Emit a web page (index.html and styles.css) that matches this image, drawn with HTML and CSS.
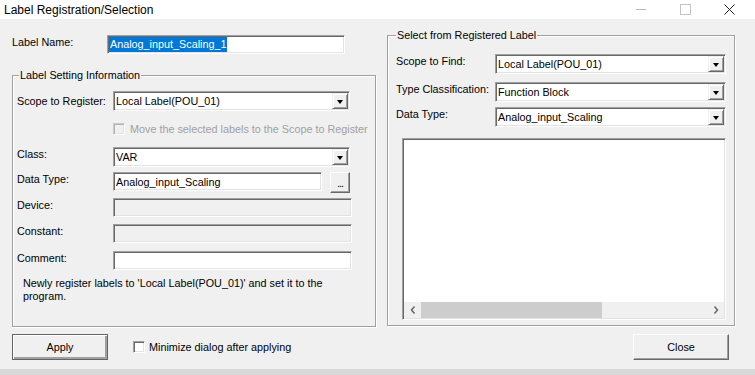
FILE: index.html
```html
<!DOCTYPE html>
<html lang="en">
<head>
    <meta charset="UTF-8">
    <title>Label Registration/Selection</title>
    <link rel="stylesheet" href="styles.css">
</head>
<body>
    <div class="window">
        <div class="titlebar">
            <span class="title">Label Registration/Selection</span>
            <div class="caption-buttons">
                <span class="cap cap-min"></span>
                <span class="cap cap-max"></span>
                <span class="cap cap-close">
                    <svg width="11" height="11" viewBox="0 0 11 11"><path d="M0.5 0.5 L10.5 10.5 M10.5 0.5 L0.5 10.5" stroke="#222" stroke-width="1" fill="none"/></svg>
                </span>
            </div>
        </div>

        <div class="dialog">
            <div class="left-col">
                <div class="name-row">
                    <span class="name-label">Label Name:</span>
                    <div class="edit name-edit"><span class="selected">Analog_input_Scaling_1</span></div>
                </div>

                <fieldset class="group group-left">
                    <legend>Label Setting Information</legend>
                    <div class="row row-scope">
                        <span class="lbl">Scope to Register:</span>
                        <div class="combo combo-left"><span class="combo-text">Local Label(POU_01)</span><span class="drop"></span></div>
                    </div>
                    <div class="check-row">
                        <span class="check check-disabled"></span>
                        <span class="check-text disabled-text">Move the selected labels to the Scope to Register</span>
                    </div>
                    <div class="row">
                        <span class="lbl">Class:</span>
                        <div class="combo combo-left"><span class="combo-text">VAR</span><span class="drop"></span></div>
                    </div>
                    <div class="row row-type">
                        <span class="lbl">Data Type:</span>
                        <div class="edit type-edit"><span class="edit-text">Analog_input_Scaling</span></div>
                        <span class="browse">...</span>
                    </div>
                    <div class="row row-device">
                        <span class="lbl">Device:</span>
                        <div class="edit wide-edit disabled"></div>
                    </div>
                    <div class="row row-constant">
                        <span class="lbl">Constant:</span>
                        <div class="edit wide-edit disabled"></div>
                    </div>
                    <div class="row row-comment">
                        <span class="lbl">Comment:</span>
                        <div class="edit wide-edit"></div>
                    </div>
                    <p class="note">Newly register labels to 'Local Label(POU_01)' and set it to the program.</p>
                </fieldset>
            </div>

            <fieldset class="group group-right">
                <legend>Select from Registered Label</legend>
                <div class="row">
                    <span class="lbl lbl-right">Scope to Find:</span>
                    <div class="combo combo-right"><span class="combo-text">Local Label(POU_01)</span><span class="drop"></span></div>
                </div>
                <div class="row row-class">
                    <span class="lbl lbl-right">Type Classification:</span>
                    <div class="combo combo-right"><span class="combo-text">Function Block</span><span class="drop"></span></div>
                </div>
                <div class="row row-dtype">
                    <span class="lbl lbl-right">Data Type:</span>
                    <div class="combo combo-right"><span class="combo-text">Analog_input_Scaling</span><span class="drop"></span></div>
                </div>
                <div class="listbox">
                    <div class="list-items"></div>
                    <div class="hscroll">
                        <span class="arrow">
                            <svg width="6" height="8" viewBox="0 0 6 8"><path d="M4.5 0.5 L1.5 4 L4.5 7.5" stroke="#606060" stroke-width="1.4" fill="none"/></svg>
                        </span>
                        <span class="thumb"></span>
                        <span class="track"></span>
                        <span class="arrow">
                            <svg width="6" height="8" viewBox="0 0 6 8"><path d="M1.5 0.5 L4.5 4 L1.5 7.5" stroke="#606060" stroke-width="1.4" fill="none"/></svg>
                        </span>
                    </div>
                </div>
            </fieldset>

            <div class="footer">
                <span class="btn btn-default">Apply</span>
                <span class="check footer-check"></span>
                <span class="check-text">Minimize dialog after applying</span>
                <span class="btn btn-close">Close</span>
            </div>
        </div>
    </div>
</body>
</html>
```

FILE: styles.css
```css
body {
    margin: 0;
    background-color: #d8d8d8;
    font-family: "Liberation Sans", Arial, sans-serif;
    font-size: 10.8px;
    color: #000;
}
.window {
    width: 755px;
    height: 369px;
    background-color: #f0f0f0;
}
.titlebar {
    height: 19px;
    background-color: #fff;
    display: flex;
    align-items: center;
}
.title {
    flex: 1;
    padding-left: 4px;
    font-size: 12px;
}
.caption-buttons {
    display: flex;
    height: 19px;
    margin-right: 4px;
}
.cap {
    width: 44px;
    display: flex;
    align-items: center;
    justify-content: center;
}
.cap-min::before {
    content: "";
    width: 10px;
    height: 1px;
    background-color: #b8b8b8;
}
.cap-max::before {
    content: "";
    width: 9px;
    height: 9px;
    border: 1px solid #c4c4c4;
}
.dialog {
    display: grid;
    grid-template-columns: 364px 348px;
    column-gap: 11px;
    padding-left: 12px;
    align-items: start;
}
.name-row {
    display: flex;
    align-items: flex-start;
    margin-top: 16px;
    height: 19px;
}
.name-label {
    width: 95px;
    line-height: 13px;
    padding-top: 1px;
}
.edit {
    box-sizing: border-box;
    height: 19px;
    background-color: #fff;
    border: 1px solid;
    border-color: #a0a0a0 #fff #fff #a0a0a0;
    box-shadow: inset 1px 1px #696969, inset -1px -1px #e3e3e3;
    display: flex;
    align-items: center;
    padding-left: 2px;
}
.edit.disabled {
    background-color: #f0f0f0;
}
.name-edit {
    width: 238px;
    padding-left: 1px;
}
.selected {
    background-color: #0078d7;
    color: #fff;
    line-height: 15px;
    padding: 0 1px;
}
.group {
    box-sizing: border-box;
    margin: 0;
    min-width: 0;
    border: 1px solid #a0a0a0;
    box-shadow: inset 1px 1px #fff, 1px 1px #fff;
}
.group legend {
    padding: 0 1px;
    line-height: 13px;
    background-color: #f0f0f0;
}
.group-left {
    margin-top: 15px;
    height: 258px;
    padding: 9px 0 0 4px;
}
.group-left legend {
    margin-left: 2px;
}
.group-right {
    margin-top: 10px;
    height: 297px;
    padding: 12px 7px 0 8px;
}
.row {
    display: flex;
    align-items: flex-start;
}
.lbl {
    width: 96px;
    flex: none;
    line-height: 13px;
    padding-top: 1px;
}
.row-scope {
    align-items: center;
}
.row-scope .lbl {
    padding-top: 0;
}
.lbl-right {
    width: 99px;
}
.combo {
    box-sizing: border-box;
    height: 20px;
    padding: 1px;
    background-color: #fff;
    border: 1px solid;
    border-color: #a0a0a0 #fff #fff #a0a0a0;
    box-shadow: inset 1px 1px #696969, inset -1px -1px #e3e3e3;
    display: flex;
    align-items: center;
}
.combo-left {
    width: 237px;
}
.combo-right {
    width: 231px;
}
.combo-text {
    flex: 1;
    padding-left: 1px;
}
.drop {
    box-sizing: border-box;
    width: 16px;
    height: 16px;
    background-color: #f0f0f0;
    border: 1px solid;
    border-color: #f0f0f0 #696969 #696969 #f0f0f0;
    box-shadow: inset 1px 1px #fff, inset -1px -1px #a0a0a0;
    display: flex;
    align-items: center;
    justify-content: center;
}
.drop::before {
    content: "";
    border-left: 3px solid transparent;
    border-right: 3px solid transparent;
    border-top: 4px solid #000;
    margin-top: 1px;
}
.check-row {
    display: flex;
    align-items: center;
    height: 36px;
    padding-left: 96px;
}
.check {
    box-sizing: border-box;
    width: 12px;
    height: 12px;
    flex: none;
    background-color: #fff;
    border: 1px solid;
    border-color: #a0a0a0 #fff #fff #a0a0a0;
    box-shadow: inset 1px 1px #696969, inset -1px -1px #e3e3e3;
}
.check-disabled {
    background-color: #f0f0f0;
    border-color: #c8c8c8 #fff #fff #c8c8c8;
    box-shadow: inset 1px 1px #b4b4b4, inset -1px -1px #e3e3e3;
}
.check-text {
    margin-left: 5px;
}
.disabled-text {
    color: #a0a0a0;
}
.row-type {
    margin-top: 5px;
    height: 21px;
}
.type-edit {
    width: 209px;
}
.browse {
    box-sizing: border-box;
    width: 20px;
    height: 21px;
    margin-left: 8px;
    background-color: #f0f0f0;
    border: 1px solid;
    border-color: #fff #696969 #696969 #fff;
    box-shadow: inset -1px -1px #a0a0a0;
    text-align: center;
    line-height: 20px;
    letter-spacing: -1px;
}
.wide-edit {
    width: 239px;
}
.row-device {
    margin-top: 5px;
}
.row-constant {
    margin-top: 7px;
}
.row-comment {
    margin-top: 8px;
}
.note {
    width: 320px;
    margin: 7px 0 0 6px;
    line-height: 13px;
}
.row-class {
    margin-top: 8px;
}
.row-dtype {
    margin-top: 5px;
}
.listbox {
    box-sizing: border-box;
    width: 324px;
    height: 182px;
    margin: 11px 0 0 6px;
    padding: 1px;
    background-color: #fff;
    border: 1px solid;
    border-color: #a0a0a0 #fff #fff #a0a0a0;
    box-shadow: inset 1px 1px #696969, inset -1px -1px #e3e3e3;
    display: flex;
    flex-direction: column;
}
.list-items {
    flex: 1;
}
.hscroll {
    height: 16px;
    display: flex;
    background-color: #f0f0f0;
}
.arrow {
    width: 17px;
    display: flex;
    align-items: center;
    justify-content: center;
}
.thumb {
    width: 181px;
    background-color: #cdcdcd;
}
.track {
    flex: 1;
}
.footer {
    grid-column: 1 / -1;
    display: flex;
    align-items: center;
    margin-top: 7px;
}
.btn {
    box-sizing: border-box;
    width: 96px;
    height: 26px;
    background-color: #f0f0f0;
    border: 1px solid;
    border-color: #fff #696969 #696969 #fff;
    box-shadow: inset -1px -1px #a0a0a0;
    display: flex;
    align-items: center;
    justify-content: center;
}
.btn-default {
    border-color: #646464;
    box-shadow: inset 1px 1px #fff, inset -2px -2px #a0a0a0;
}
.footer-check {
    margin-left: 25px;
}
.footer .check-text {
    margin-left: 4px;
}
.btn-close {
    margin-left: auto;
    margin-right: 6px;
}
```
